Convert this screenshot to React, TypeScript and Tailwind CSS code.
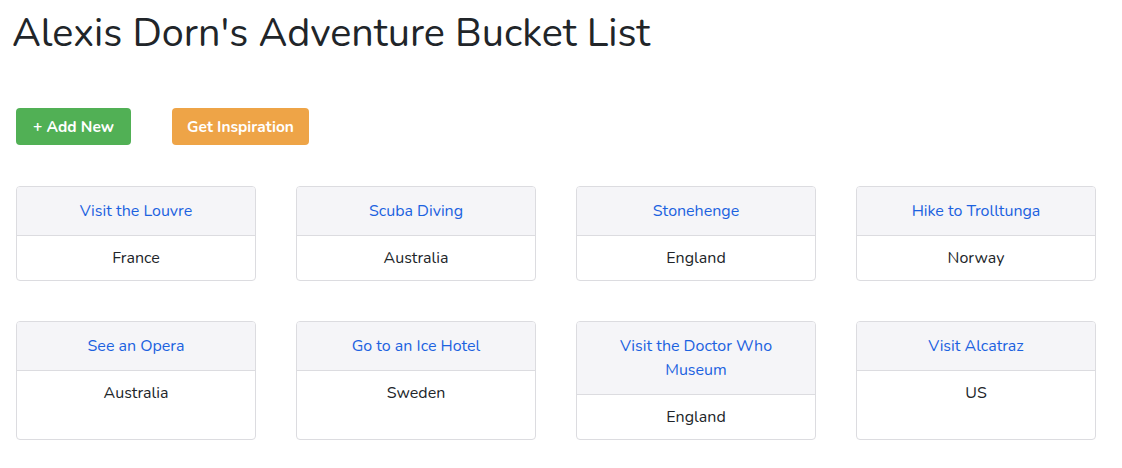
const items = [
  { title: 'Visit the Louvre', place: 'France' },
  { title: 'Scuba Diving', place: 'Australia' },
  { title: 'Stonehenge', place: 'England' },
  { title: 'Hike to Trolltunga', place: 'Norway' },
  { title: 'See an Opera', place: 'Australia' },
  { title: 'Go to an Ice Hotel', place: 'Sweden' },
  { title: 'Visit the Doctor Who Museum', place: 'England' },
  { title: 'Visit Alcatraz', place: 'US' },
]

export default function App() {
  return (
    <div className="min-h-screen bg-white pl-4 text-[#212529] font-['Nunito','Lato','Noto_Sans',sans-serif]">
      <h1 className="-ml-1 pt-[9px] text-[39.6px] leading-[48px] font-normal">
        Alexis Dorn's Adventure Bucket List
      </h1>

      <div className="mt-[51px] flex gap-[41px]">
        <button className="h-[37px] w-[115px] rounded bg-[#51b055] text-[15.5px] font-bold text-white">
          + Add New
        </button>
        <button className="h-[37px] w-[137px] rounded bg-[#eea447] text-[15.5px] font-bold text-white">
          Get Inspiration
        </button>
      </div>

      <div className="mt-[41px] grid grid-cols-[repeat(4,240px)] gap-x-10 gap-y-10">
        {items.map((it) => (
          <div
            key={it.title}
            className="flex flex-col overflow-hidden rounded border border-[#dcdce0] text-center text-base"
          >
            <div className="border-b border-[#dcdce0] bg-[#f5f5f8] px-10 py-3 leading-6 text-[#1c62e0]">
              {it.title}
            </div>
            <div className="flex-1 px-4 py-[10px] leading-6">{it.place}</div>
          </div>
        ))}
      </div>
    </div>
  )
}
